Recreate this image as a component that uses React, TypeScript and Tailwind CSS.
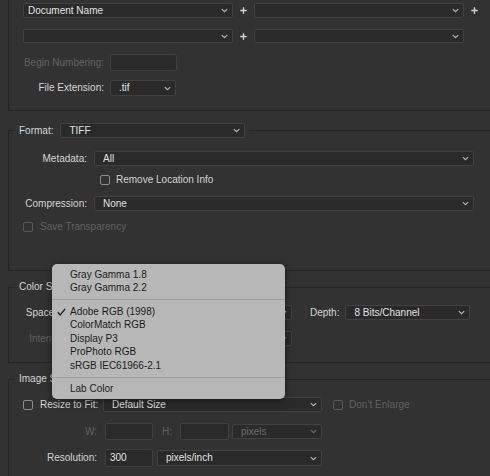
import clsx from "clsx";

// Photoshop-style "Image Processor" options panel with an open colour-space menu

function Chevron({ dim }: { dim?: boolean }) {
  return (
    <svg width="7" height="5" viewBox="0 0 7 5" className="shrink-0">
      <path d="M0.8 1.1l2.7 2.6 2.7-2.6" fill="none" stroke={dim ? "#6a6a6a" : "#b4b4b4"} strokeWidth="1.2" />
    </svg>
  );
}

function Plus() {
  return (
    <div className="flex w-[21px] justify-center">
      <svg width="7" height="7" viewBox="0 0 7 7">
        <path d="M3.5 0.3v6.4M0.3 3.5h6.4" stroke="#d2d2d2" strokeWidth="1.4" />
      </svg>
    </div>
  );
}

function Select({ className, value, dim, pl = "pl-[8px]" }: { className: string; value: string; dim?: boolean; pl?: string }) {
  return (
    <div className={clsx("flex items-center justify-between rounded-[2px] border border-[#424242] bg-[#2a2a2a] pr-[4px]", pl, className)}>
      <span className={dim ? "text-[#6c6c6c]" : "text-[#e2e2e2]"}>{value}</span>
      <Chevron dim={dim} />
    </div>
  );
}

function Input({ className, value }: { className: string; value?: string }) {
  return (
    <div className={clsx("flex items-center rounded-[2px] border border-[#404040] bg-[#2a2a2a] pl-[4px] text-[#e2e2e2]", className)}>
      {value}
    </div>
  );
}

function Checkbox({ dim }: { dim?: boolean }) {
  return <span className={clsx("block h-[10px] w-[10px] shrink-0 rounded-[2px] border", dim ? "border-[#585858]" : "border-[#8a8a8a]")} />;
}

const spaces = [
  ["Gray Gamma 1.8", "Gray Gamma 2.2"],
  ["Adobe RGB (1998)", "ColorMatch RGB", "Display P3", "ProPhoto RGB", "sRGB IEC61966-2.1"],
  ["Lab Color"],
];

export default function App() {
  return (
    <div className="relative h-[476px] w-[490px] overflow-hidden bg-[#323232] font-['Liberation_Sans',Arial,sans-serif] text-[10px] leading-[12px] text-[#d4d4d4]">
      {/* File naming */}
      <div className="ml-2 border-b border-l border-[#262626] pb-[14px] pt-[3px]">
        <div className="flex h-[15px] items-center pl-[14px]">
          <Select className="h-[15px] w-[210px]" pl="pl-[4px]" value="Document Name" />
          <Plus />
          <Select className="h-[15px] w-[210px]" value="" />
          <Plus />
        </div>
        <div className="mt-[11px] flex h-[14px] items-center pl-[14px]">
          <Select className="h-[14px] w-[210px]" value="" />
          <Plus />
          <Select className="h-[14px] w-[210px]" value="" />
        </div>
        <div className="mt-[11px] flex items-center">
          <span className="w-[95px] text-right text-[#616161]">Begin Numbering:</span>
          <Input className="ml-[6px] h-[17px] w-[67px]" />
        </div>
        <div className="mt-[9px] flex items-center">
          <span className="w-[95px] text-right">File Extension:</span>
          <Select className="ml-[6px] h-[16px] w-[66px]" value=".tif" />
        </div>
      </div>

      {/* Format */}
      <fieldset className="ml-2 mt-[12px] border border-r-0 border-[#262626] pb-[37px]">
        <legend className="ml-[6px] px-[4px]">
          <div className="flex items-center gap-[7px]">
            <span>Format:</span>
            <Select className="h-[15px] w-[185px]" value="TIFF" />
          </div>
        </legend>
        <div className="mt-[13px] flex items-center">
          <span className="w-[78px] text-right">Metadata:</span>
          <Select className="ml-[7px] h-[15px] w-[380px]" value="All" />
        </div>
        <div className="mt-[8px] flex h-[12px] items-center gap-[6px] pl-[91px]">
          <Checkbox />
          <span>Remove Location Info</span>
        </div>
        <div className="mt-[10px] flex items-center">
          <span className="w-[78px] text-right">Compression:</span>
          <Select className="ml-[7px] h-[15px] w-[380px]" value="None" />
        </div>
        <div className="mt-[10px] flex h-[12px] items-center gap-[7px] pl-[14px] text-[#616161]">
          <Checkbox dim />
          <span>Save Transparency</span>
        </div>
      </fieldset>

      {/* Color space */}
      <fieldset className="ml-2 mt-[10px] border border-r-0 border-[#262626] pb-[16px]">
        <legend className="ml-[6px] px-[4px]">Color Space</legend>
        <div className="mt-[12px] flex items-center">
          <span className="w-[48px] text-right">Space:</span>
          <Select className="ml-[6px] h-[15px] w-[229px]" value="" />
          <span className="ml-[18px]">Depth:</span>
          <Select className="ml-[6px] h-[15px] w-[125px]" value="8 Bits/Channel" />
        </div>
        <div className="mt-[11px] flex items-center">
          <span className="w-[48px] text-right text-[#616161]">Intent:</span>
          <Select className="ml-[6px] h-[15px] w-[229px]" value="" dim />
        </div>
      </fieldset>

      {/* Image size */}
      <fieldset className="ml-2 mt-[10px] border border-r-0 border-[#262626] pb-[20px]">
        <legend className="ml-[6px] px-[4px]">Image Size</legend>
        <div className="mt-[12px] flex items-center">
          <div className="flex w-[94px] items-center gap-[7px] pl-[14px]">
            <Checkbox />
            <span className="whitespace-nowrap">Resize to Fit:</span>
          </div>
          <Select className="h-[15px] w-[219px]" value="Default Size" />
          <span className="ml-[11px]">
            <Checkbox dim />
          </span>
          <span className="ml-[6px] text-[#616161]">Don’t Enlarge</span>
        </div>
        <div className="mt-[11px] flex items-center text-[#616161]">
          <span className="w-[88px] text-right">W:</span>
          <Input className="ml-[8px] h-[17px] w-[48px]" />
          <span className="ml-[9px]">H:</span>
          <Input className="ml-[8px] h-[17px] w-[49px]" />
          <Select className="ml-[3px] h-[15px] w-[90px]" value="pixels" dim />
        </div>
        <div className="mt-[9px] flex items-center">
          <span className="w-[88px] text-right">Resolution:</span>
          <Input className="ml-[8px] h-[18px] w-[48px]" value="300" />
          <Select className="ml-[4px] h-[16px] w-[165px]" value="pixels/inch" />
        </div>
      </fieldset>

      {/* Open colour space menu */}
      <div className="absolute left-[52px] top-[264px] h-[135px] w-[233px] rounded-[5px] bg-[#b7b7b7] py-[4px] text-[10px] text-[#1c1c1c] shadow-[0_2px_8px_rgba(0,0,0,0.45)]">
        {spaces.map((group, gi) => (
          <div key={gi}>
            {gi > 0 && <div className="mb-[5px] mt-[4px] h-px bg-[#9d9d9d]" />}
            {group.map((name) => (
              <div key={name} className="flex h-[13.5px] items-center">
                <span className="flex w-[18px] justify-center">
                  {name === "Adobe RGB (1998)" && (
                    <svg width="9" height="8" viewBox="0 0 9 8">
                      <path d="M0.8 4.3l2.4 2.6L8.2 0.8" fill="none" stroke="#1c1c1c" strokeWidth="1.3" />
                    </svg>
                  )}
                </span>
                <span>{name}</span>
              </div>
            ))}
          </div>
        ))}
      </div>
    </div>
  );
}
